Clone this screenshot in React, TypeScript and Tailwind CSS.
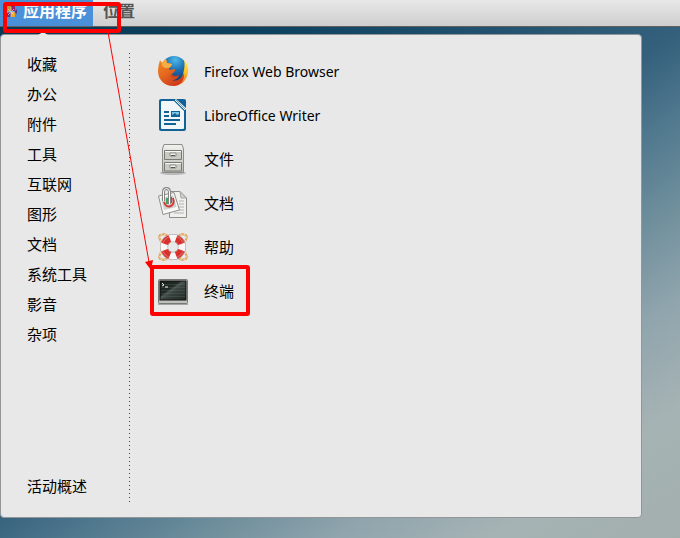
import React from "react";

const categories = ["收藏", "办公", "附件", "工具", "互联网", "图形", "文档", "系统工具", "影音", "杂项"];

function FirefoxIcon() {
  return (
    <svg width="32" height="32" viewBox="0 0 32 32" aria-hidden="true">
      <defs>
        <radialGradient id="globe" cx="0.55" cy="0.15" r="0.8">
          <stop offset="0" stopColor="#4fb8e8" />
          <stop offset="0.5" stopColor="#1c70b4" />
          <stop offset="1" stopColor="#123a70" />
        </radialGradient>
        <linearGradient id="fox" x1="0" y1="0" x2="0.6" y2="1">
          <stop offset="0" stopColor="#f08a24" />
          <stop offset="0.5" stopColor="#e66a1f" />
          <stop offset="1" stopColor="#cf3a1c" />
        </linearGradient>
        <linearGradient id="tail" x1="0" y1="0" x2="0" y2="1">
          <stop offset="0" stopColor="#fff04a" />
          <stop offset="0.5" stopColor="#fbc02a" />
          <stop offset="1" stopColor="#e65a1e" />
        </linearGradient>
      </defs>
      <circle cx="17" cy="14" r="13" fill="url(#globe)" />
      <path d="M27 5C30 8 32 13 31 18C29 27 23 31 16 31C20 28 26 24 26.500 17C27.500 13 28 9 27 5Z" fill="url(#tail)" />
      <path d="M3 5L5 8C6 6 8 5 9 4L10 8L15 9C15 11 13 12 12 13L12 15L18 14C19 16 16 18 15 19C15 21 19 22 22 20C21 24 18 25 15 25C19 27 25 24 27 18C28 25 23 31 16 31C8 31 1 25 1 16C1 12 2 9 3 5Z" fill="url(#fox)" />
      <path d="M5 8C6 6 8 5 9 4L10 8L15 9C15 11 13 12 12 13L8 13L5 11Z" fill="#f5ae43" />
      <path d="M15 18C15 21 19 22 22 20C20 23 16 24 13 21Z" fill="#b93a1a" opacity="0.5" />
    </svg>
  );
}

function WriterIcon() {
  return (
    <svg width="32" height="32" viewBox="0 0 32 32" aria-hidden="true">
      <path d="M5 0H18L29 11V30Q29 32 27 32H4Q2 32 2 30V2Q2 0 4 0Z" fill="#116296" />
      <path d="M5 2H17L27 12V29Q27 30 26 30H5Q4 30 4 29V3Q4 2 5 2Z" fill="#f3f6f8" />
      <path d="M19 0H27Q29 0 29 2V9Z" fill="#116296" />
      <path d="M18 1L28 11" stroke="#e4ecf0" />
      <path d="M7 13H12M7 17H12M7 21H23M7 25H19" stroke="#116296" strokeWidth="2" />
      <path d="M14 12H23V18H14Z" fill="#116296" />
      <path d="M15 13H22V15L20 16L18 14L15 16Z" fill="#80c5ec" />
    </svg>
  );
}

function FilesIcon() {
  return (
    <svg width="32" height="32" viewBox="0 0 32 32" aria-hidden="true">
      <defs>
        <linearGradient id="cabinet" x1="0" y1="0" x2="0" y2="1">
          <stop offset="0" stopColor="#f2f2ef" />
          <stop offset="1" stopColor="#b7b9b2" />
        </linearGradient>
      </defs>
      <ellipse cx="16" cy="30" rx="13" ry="2" fill="#777" opacity="0.4" />
      <path d="M7 1.500H25L26.500 6V29.500H5.500V6Z" fill="url(#cabinet)" stroke="#8b8d87" />
      <path d="M7.500 7.500H24.500V16.500H7.500ZM7.500 19.500H24.500V28H7.500Z" fill="#c8cac3" stroke="#777972" />
      <path d="M8 8.500H24M8 20.500H24" stroke="#f7f7f5" />
      <path d="M13 10H19V13H13ZM13 22H19V25H13Z" fill="#f5f5f2" stroke="#8d8f88" />
      <path d="M14 12.500H18M14 24.500H18" stroke="#555" />
    </svg>
  );
}

function DocumentsIcon() {
  return (
    <svg width="32" height="32" viewBox="0 0 32 32" aria-hidden="true">
      <path d="M12.500 4.500H23L29.500 11V30.500H12.500Z" fill="#f0f0ee" stroke="#8d8f89" />
      <path d="M23 4.500L29.500 11H24Z" fill="#d2d3cf" stroke="#a5a6a1" />
      <path d="M22 14H27M22 17H27M22 20H27M20 23H27M17 26H27" stroke="#b2b4af" />
      <path d="M1.500 9L17 5.500L22.500 23L6 27.500Z" fill="#f8f8f7" stroke="#8d8f89" />
      <path d="M4 11L16 8L19.500 20L7 23Z" fill="#cfd2ce" />
      <path d="M7 15Q9 21 14 19Q18 17 16 11" fill="none" stroke="#d23b38" strokeWidth="2" />
      <path d="M10 11V17" stroke="#3fa75b" strokeWidth="2" />
      <path d="M14 10V16" stroke="#3972b5" strokeWidth="2" />
      <path d="M6.500 14V5Q6.500 1.500 9.500 1.500Q12.500 1.500 12.500 5V17" fill="none" stroke="#858585" strokeWidth="3" />
      <path d="M6.500 14V5Q6.500 1.500 9.500 1.500Q12.500 1.500 12.500 5V17" fill="none" stroke="#fff" />
    </svg>
  );
}

function HelpIcon() {
  return (
    <svg width="32" height="32" viewBox="0 0 32 32" aria-hidden="true">
      <g fill="none" stroke="#dda45d" strokeWidth="2">
        <path d="M4 11L2 6L3 4L7 3L11 5M28 11L30 6L29 4L25 3L21 5M4 21L2 26L3 28L7 29L11 27M28 21L30 26L29 28L25 29L21 27" />
      </g>
      <path d="M4 11L2 6L3 4L7 3L11 5M28 11L30 6L29 4L25 3L21 5M4 21L2 26L3 28L7 29L11 27M28 21L30 26L29 28L25 29L21 27" fill="none" stroke="#f5dfb6" strokeDasharray="2 2" />
      <circle cx="16" cy="16" r="9" fill="none" stroke="#9a9792" strokeWidth="8" />
      <circle cx="16" cy="16" r="9" fill="none" stroke="#f8f7f5" strokeWidth="7" />
      <circle cx="16" cy="16" r="9" fill="none" stroke="#d9302d" strokeWidth="7" pathLength="80" strokeDasharray="11 9" strokeDashoffset="-4.5" />
      <circle cx="16" cy="16" r="11" fill="none" stroke="#fff" opacity="0.3" />
    </svg>
  );
}

function TerminalIcon() {
  return (
    <svg width="32" height="32" viewBox="0 0 32 32" aria-hidden="true">
      <defs>
        <linearGradient id="screen" x1="0" y1="0" x2="1" y2="1">
          <stop offset="0" stopColor="#151c1a" />
          <stop offset="0.4" stopColor="#222a27" />
          <stop offset="0.45" stopColor="#4d5854" />
          <stop offset="0.55" stopColor="#38423e" />
          <stop offset="1" stopColor="#202724" />
        </linearGradient>
      </defs>
      <path d="M2 26H30L31 30H1Z" fill="#777" opacity="0.6" />
      <rect x="1.500" y="4.500" width="29" height="24" rx="1" fill="#bfc0bd" stroke="#777975" />
      <rect x="3" y="6" width="26" height="19" fill="url(#screen)" stroke="#111" />
      <path d="M4 9.500H28M4 12.500H28M4 15.500H28M4 18.500H28M4 21.500H28" stroke="#687269" opacity="0.3" />
      <path d="M5 8L7 10L5 11M8 12H11" fill="none" stroke="#eef5ee" />
    </svg>
  );
}

const apps = [
  { name: "Firefox Web Browser", Icon: FirefoxIcon },
  { name: "LibreOffice Writer", Icon: WriterIcon },
  { name: "文件", Icon: FilesIcon },
  { name: "文档", Icon: DocumentsIcon },
  { name: "帮助", Icon: HelpIcon },
  { name: "终端", Icon: TerminalIcon },
];

function DistroIcon() {
  return (
    <svg width="12" height="14" viewBox="0 0 12 14" className="shrink-0" aria-hidden="true">
      <path d="M2 1H6V6H2Z" fill="#b39a35" />
      <path d="M6 1H10V6H6Z" fill="#932279" />
      <path d="M1 7H6V12H1Z" fill="#5c3b86" />
      <path d="M6 7H10V12H6Z" fill="#efa724" />
      <path d="M0 4L3 7L0 9Z" fill="#d9a0d0" />
      <path d="M12 4L9 7L12 9Z" fill="#5c3b86" />
      <path d="M2 7H10M6 2V12M3 4L9 10M9 4L3 10" stroke="#f6ead8" opacity="0.6" />
    </svg>
  );
}

export default function App() {
  return (
    <div className="relative flex min-h-screen flex-col overflow-hidden bg-[linear-gradient(145deg,#063854_0%,#0d4260_22%,#34607c_50%,#4c758c_57%,#6f8f9c_67%,#8fa4ad_76%,#a6b3b4_87%,#a2afad_100%)] font-['Noto_Sans','Noto_Sans_CJK_SC',sans-serif] text-black">
      <header className="flex h-[27px] border-b border-[#606060] bg-linear-to-b from-[#e8e8e8] to-[#cecece] text-[16px] leading-[22px] font-bold">
        <button className="flex w-[93px] items-start gap-[6px] bg-[#4a90d9] pl-[5px] text-white">
          <span className="flex h-6 items-center"><DistroIcon /></span>
          <span className="whitespace-nowrap">应用程序</span>
        </button>
        <button className="flex items-start px-[10px] text-[#555]">位置</button>
      </header>

      <main className="mt-[7px] mr-[38px] mb-5 flex flex-1 rounded-[4px] border border-[#929698] bg-[#e8e8e8] pt-[14px] pb-[15px]">
        <nav className="flex w-32 shrink-0 flex-col pb-px text-[15px]">
          {categories.map((name) => (
            <button key={name} className="h-[30px] pl-[26px] text-left">{name}</button>
          ))}
          <button className="mt-auto h-[30px] pl-[26px] text-left">活动概述</button>
        </nav>
        <div className="mt-1 w-px shrink-0 bg-[repeating-linear-gradient(to_bottom,#444_0_1px,transparent_1px_4px)]" />
        <section className="flex flex-1 flex-col pl-[27px] text-[15px]">
          {apps.map(({ name, Icon }) => (
            <button key={name} className="flex h-11 items-center gap-[15px] text-left">
              <Icon />
              <span className={/^[A-Z]/.test(name) ? "text-[14px]" : ""}>{name}</span>
            </button>
          ))}
        </section>
      </main>

      <svg className="pointer-events-none absolute top-0 left-0 h-[330px] w-[270px]" viewBox="0 0 270 330" fill="none" aria-hidden="true">
        <path d="M38 35L43 32L48 35Z" fill="#e8e8e8" />
        <rect x="5" y="4" width="114" height="27" rx="1" stroke="#ff0000" strokeWidth="4" />
        <rect x="152" y="267" width="96" height="47" rx="1" stroke="#ff0000" strokeWidth="4" />
        <path d="M108 32L149 262" stroke="#ff0000" />
        <path d="M145 262L153 260L151 270Z" fill="#ff0000" />
      </svg>
    </div>
  );
}
